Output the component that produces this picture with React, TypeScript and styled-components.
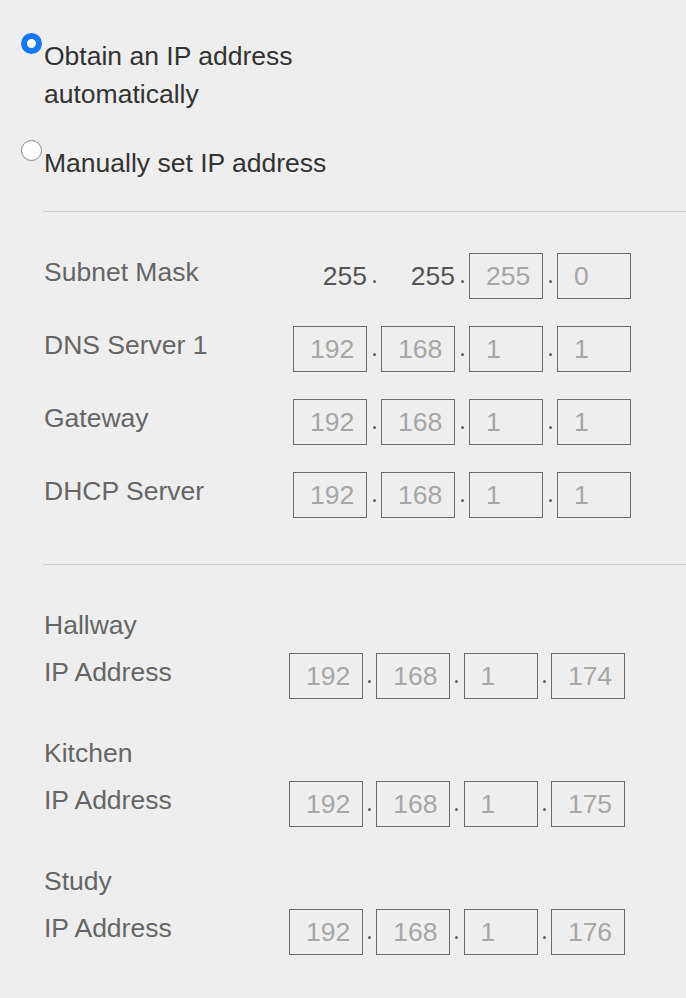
import React from "react";
import styled, { createGlobalStyle } from "styled-components";

const Global = createGlobalStyle`
  html, body { margin: 0; padding: 0; background: #eeeeee; }
  body { font-family: "Liberation Sans", Arial, sans-serif; }
`;

const Page = styled.div`
  width: 686px;
  min-height: 998px;
  background: #eeeeee;
  padding: 37px 0 0 0;
  box-sizing: border-box;
`;

const Option = styled.div<{ $gap: number }>`
  display: flex;
  align-items: flex-start;
  padding-left: 21px;
  margin-bottom: ${(p) => p.$gap}px;
`;

const Radio = styled.span<{ $checked?: boolean }>`
  flex: none;
  width: 21px;
  height: 21px;
  border-radius: 50%;
  box-sizing: border-box;
  margin-top: -4px;
  margin-right: 2px;
  background: #ffffff;
  border: ${(p) => (p.$checked ? "6.5px solid #1479f6" : "1.5px solid #8a8a8a")};
`;

const OptionText = styled.span`
  font-size: 26.5px;
  line-height: 38px;
  color: #333333;
  width: 300px;
`;

const Divider = styled.hr<{ $after: number }>`
  border: none;
  height: 1px;
  background: #cfcfcf;
  margin: 0 0 ${(p) => p.$after}px 43px;
`;

const Section = styled.div`
  padding-left: 44px;
`;

const Row = styled.div<{ $labelWidth: number; $after: number }>`
  display: grid;
  grid-template-columns: ${(p) => p.$labelWidth}px auto;
  align-items: start;
  margin-bottom: ${(p) => p.$after}px;
`;

const Label = styled.div`
  font-size: 26.5px;
  line-height: 38px;
  color: #666666;
`;

const Heading = styled(Label)`
  margin-bottom: 9px;
`;

const Octets = styled.div`
  display: flex;
  align-items: stretch;
  height: 46px;
`;

const Box = styled.div`
  width: 74px;
  height: 46px;
  box-sizing: border-box;
  border: 1.5px solid #6c6c6c;
  padding-left: 16px;
  display: flex;
  align-items: center;
  font-size: 26.5px;
  color: #a6a6a6;
`;

const Fixed = styled.div`
  width: 74px;
  height: 46px;
  display: flex;
  align-items: center;
  justify-content: flex-end;
  font-size: 26.5px;
  color: #555555;
`;

const Sep = styled.div<{ $w: number }>`
  width: ${(p) => p.$w}px;
  display: flex;
  align-items: flex-end;
  justify-content: center;
  padding-bottom: 16px;
  box-sizing: border-box;
  &::after {
    content: "";
    width: 3px;
    height: 3px;
    border-radius: 50%;
    background: #606060;
  }
`;

type Oct = { v: string; fixed?: boolean };

const IpField = ({ octets, sep }: { octets: Oct[]; sep: number }) => (
  <Octets>
    {octets.map((o, i) => (
      <React.Fragment key={i}>
        {o.fixed ? <Fixed>{o.v}</Fixed> : <Box>{o.v}</Box>}
        {i < octets.length - 1 && <Sep $w={sep} />}
      </React.Fragment>
    ))}
  </Octets>
);

const ip = (...v: string[]): Oct[] => v.map((x) => ({ v: x }));

const netRows: { label: string; octets: Oct[] }[] = [
  {
    label: "Subnet Mask",
    octets: [{ v: "255", fixed: true }, { v: "255", fixed: true }, { v: "255" }, { v: "0" }],
  },
  { label: "DNS Server 1", octets: ip("192", "168", "1", "1") },
  { label: "Gateway", octets: ip("192", "168", "1", "1") },
  { label: "DHCP Server", octets: ip("192", "168", "1", "1") },
];

const devices = [
  { name: "Hallway", last: "174" },
  { name: "Kitchen", last: "175" },
  { name: "Study", last: "176" },
];

export default function App() {
  return (
    <Page>
      <Global />
      <Option $gap={31}>
        <Radio $checked />
        <OptionText>Obtain an IP address automatically</OptionText>
      </Option>
      <Option $gap={29}>
        <Radio />
        <OptionText>Manually set IP address</OptionText>
      </Option>
      <Divider $after={41} />
      <Section>
        {netRows.map((r, i) => (
          <Row key={r.label} $labelWidth={249} $after={i === netRows.length - 1 ? 46 : 27}>
            <Label>{r.label}</Label>
            <IpField octets={r.octets} sep={14} />
          </Row>
        ))}
      </Section>
      <Divider $after={41} />
      <Section>
        {devices.map((d) => (
          <div key={d.name}>
            <Heading>{d.name}</Heading>
            <Row $labelWidth={245} $after={35}>
              <Label>IP Address</Label>
              <IpField octets={ip("192", "168", "1", d.last)} sep={13.3} />
            </Row>
          </div>
        ))}
      </Section>
    </Page>
  );
}
